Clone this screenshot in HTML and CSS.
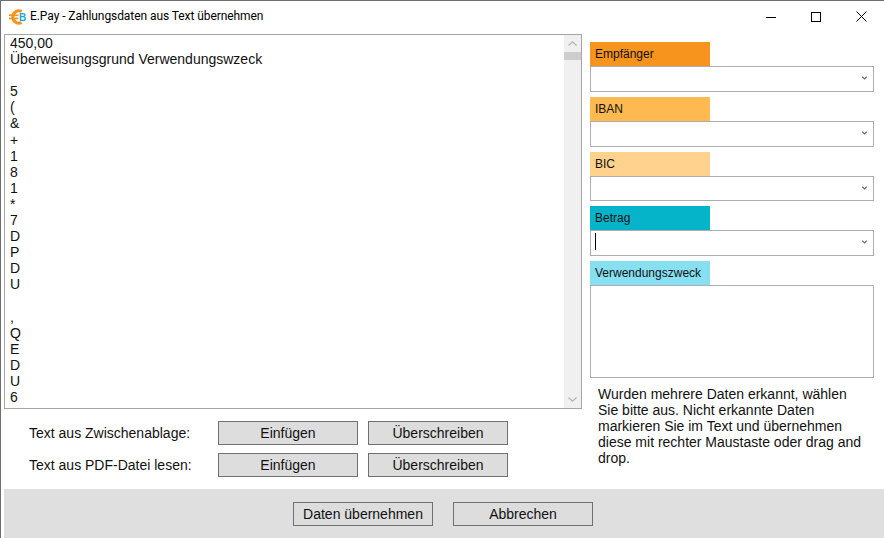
FILE: index.html
```html
<!DOCTYPE html>
<html lang="de">

<head>
<meta charset="UTF-8">
<meta name="viewport" content="width=device-width, initial-scale=1.0">
<title>E.Pay - Zahlungsdaten aus Text übernehmen</title>
<link rel="stylesheet" href="styles.css"></head>

<body>
<div class="window">

<!-- Title bar -->
<div class="titlebar">
<svg class="app-icon" width="18" height="18" viewBox="0 0 18 18">
<path d="M12.6 3.4A6.2 6.2 0 1 0 12.6 14.6" fill="none" stroke="#f7941d" stroke-width="3"/>
<rect x="0" y="6.4" width="9.5" height="1.7" fill="#f7941d"/>
<rect x="0" y="9.6" width="9.5" height="1.7" fill="#f7941d"/>
<text x="10" y="13.2" class="app-icon-letter">B</text>
</svg>
<span class="title">E.Pay - Zahlungsdaten aus Text übernehmen</span>
<div class="window-buttons">
<svg width="10" height="10" viewBox="0 0 10 10"><path d="M0 5.5H10" stroke="#000" fill="none"/></svg>
<svg width="10" height="10" viewBox="0 0 10 10"><rect x="0.5" y="0.5" width="9" height="9" stroke="#000" fill="none"/></svg>
<svg width="11" height="11" viewBox="0 0 11 11"><path d="M0.5 0.5L10.5 10.5M10.5 0.5L0.5 10.5" stroke="#000" fill="none"/></svg>
</div>
</div>

<div class="main">

<!-- Text source -->
<div class="left">
<div class="textbox">
<div class="textbox-text">450,00
Überweisungsgrund Verwendungswzeck

5
(
&amp;
+
1
8
1
*
7
D
P
D
U

,
Q
E
D
U
6</div>
<div class="scrollbar">
<svg width="9" height="5" viewBox="0 0 9 5"><path d="M0.5 4.5L4.5 0.8L8.5 4.5" stroke="#b4b4b4" stroke-width="1.2" fill="none"/></svg>
<div class="scroll-thumb"></div>
<svg class="scroll-down" width="9" height="5" viewBox="0 0 9 5"><path d="M0.5 0.5L4.5 4.2L8.5 0.5" stroke="#b4b4b4" stroke-width="1.2" fill="none"/></svg>
</div>
</div>

<div class="source-row">
<span class="source-label">Text aus Zwischenablage:</span>
<button class="btn">Einfügen</button>
<button class="btn">Überschreiben</button>
</div>
<div class="source-row">
<span class="source-label">Text aus PDF-Datei lesen:</span>
<button class="btn">Einfügen</button>
<button class="btn">Überschreiben</button>
</div>
</div>

<!-- Detected fields -->
<div class="right">
<div class="field">
<div class="field-label empfaenger">Empfänger</div>
<div class="combo">
<svg class="chevron" width="5" height="4" viewBox="0 0 5 4"><path d="M0.3 0.7L2.5 3L4.7 0.7" stroke="#666" stroke-width="1.2" fill="none"/></svg>
</div>
</div>
<div class="field">
<div class="field-label iban">IBAN</div>
<div class="combo">
<svg class="chevron" width="5" height="4" viewBox="0 0 5 4"><path d="M0.3 0.7L2.5 3L4.7 0.7" stroke="#666" stroke-width="1.2" fill="none"/></svg>
</div>
</div>
<div class="field">
<div class="field-label bic">BIC</div>
<div class="combo combo-short">
<svg class="chevron" width="5" height="4" viewBox="0 0 5 4"><path d="M0.3 0.7L2.5 3L4.7 0.7" stroke="#666" stroke-width="1.2" fill="none"/></svg>
</div>
</div>
<div class="field">
<div class="field-label betrag">Betrag</div>
<div class="combo">
<div class="caret"></div>
<svg class="chevron" width="5" height="4" viewBox="0 0 5 4"><path d="M0.3 0.7L2.5 3L4.7 0.7" stroke="#666" stroke-width="1.2" fill="none"/></svg>
</div>
</div>
<div class="field">
<div class="field-label zweck">Verwendungszweck</div>
<div class="memo"></div>
</div>
<p class="hint">Wurden mehrere Daten erkannt, wählen Sie bitte aus. Nicht erkannte Daten markieren Sie im Text und übernehmen diese mit rechter Maustaste oder drag and drop.</p>
</div>

</div>

<!-- Footer -->
<div class="footer">
<button class="btn">Daten übernehmen</button>
<button class="btn">Abbrechen</button>
</div>

</div>
</body>

</html>
```

FILE: styles.css
```css
html, body {
margin: 0;
padding: 0;
background-color: white;
}

body {
font-family: "Liberation Sans", Arial, sans-serif;
font-size: 14px;
color: #111;
overflow: hidden;
}

.window {
width: 884px;
height: 538px;
box-sizing: border-box;
display: flex;
flex-direction: column;
border-top: 1px solid #6e6e6e;
border-left: 1px solid #6e6e6e;
}

.titlebar {
height: 33px;
flex: none;
display: flex;
align-items: center;
padding: 0 17px 2px 8px;
box-sizing: border-box;
}

.app-icon {
flex: none;
}

.app-icon-letter {
font-family: "Liberation Sans", sans-serif;
font-size: 10px;
font-weight: bold;
fill: #1aa7d6;
}

.title {
font-family: Roboto, sans-serif;
font-size: 12px;
letter-spacing: -0.07px;
margin: 0 0 1px 3px;
color: #000;
}

.window-buttons {
margin-left: auto;
display: flex;
align-items: center;
gap: 35px;
}

.main {
flex: 1;
display: flex;
gap: 8px;
padding: 0 10px 0 3px;
min-height: 0;
}

.left {
width: 578px;
flex: none;
}

.textbox {
height: 375px;
box-sizing: border-box;
border: 1px solid #a5a5ad;
display: flex;
}

.textbox-text {
flex: 1;
white-space: pre-line;
line-height: 16.1px;
padding: 0 0 0 5px;
overflow: hidden;
}

.scrollbar {
width: 17px;
flex: none;
background-color: #f0f0f0;
display: flex;
flex-direction: column;
align-items: center;
padding-top: 6px;
box-sizing: border-box;
}

.scroll-thumb {
width: 100%;
height: 8px;
margin-top: 6px;
background-color: #cdcdcd;
}

.scroll-down {
margin-top: auto;
margin-bottom: 6px;
}

.source-row {
display: flex;
align-items: center;
margin-top: 8px;
padding-left: 25px;
}

.textbox + .source-row {
margin-top: 12px;
}

.source-label {
width: 189px;
flex: none;
}

.btn {
width: 140px;
height: 24px;
box-sizing: border-box;
padding: 0;
border: 1px solid #707070;
border-radius: 0;
background-color: #dddddd;
font-family: "Liberation Sans", Arial, sans-serif;
font-size: 14px;
color: #111;
}

.source-row .btn + .btn {
margin-left: 10px;
}

.right {
flex: 1;
padding-top: 8px;
}

.field {
margin-bottom: 5px;
}

.field-label {
width: 120px;
height: 24px;
line-height: 25px;
box-sizing: border-box;
padding-left: 5px;
font-size: 12px;
}

.empfaenger { background-color: #f7941d; }
.iban { background-color: #ffb951; }
.bic { background-color: #ffd28e; }
.betrag { background-color: #05b4c9; }
.zweck { background-color: #87dff2; }

.combo {
height: 26px;
box-sizing: border-box;
border: 1px solid #abadb3;
display: flex;
align-items: center;
justify-content: flex-end;
padding: 0 6px 2px 0;
position: relative;
}

.combo-short {
height: 25px;
}

.caret {
position: absolute;
left: 4px;
top: 2px;
width: 1px;
height: 17px;
background-color: #000;
}

.memo {
height: 93px;
box-sizing: border-box;
border: 1px solid #abadb3;
}

.hint {
margin: 8px 0 0 8px;
width: 270px;
line-height: 16.1px;
}

.footer {
height: 49px;
flex: none;
margin-left: 3px;
background-color: #dfdfdf;
display: flex;
justify-content: center;
align-items: flex-start;
gap: 20px;
padding: 13px 2px 0 0;
box-sizing: border-box;
}
```
